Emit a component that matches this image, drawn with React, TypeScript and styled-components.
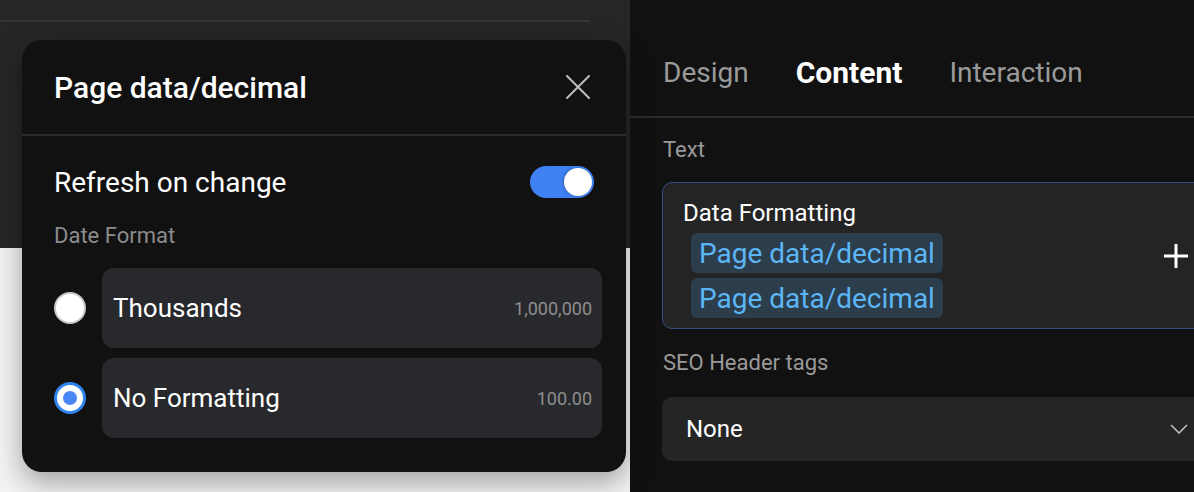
import React from "react";
import styled, { createGlobalStyle } from "styled-components";

const GlobalStyle = createGlobalStyle`
  html, body { margin: 0; padding: 0; background: #111111; }
  body { font-family: Roboto, "Noto Sans", "Liberation Sans", sans-serif; -webkit-font-smoothing: antialiased; }
  * { box-sizing: border-box; }
`;

const Screen = styled.div`
  display: flex;
  width: 1194px;
  height: 492px;
  overflow: hidden;
`;

const Canvas = styled.div`
  position: relative;
  width: 630px;
  flex: none;
  display: flex;
  flex-direction: column;
`;

const CanvasTop = styled.div`
  height: 248px;
  background: #262626;
  padding-top: 20px;
`;

const CanvasRule = styled.div`
  width: 590px;
  height: 2px;
  background: #353535;
`;

const CanvasBottom = styled.div`
  flex: 1;
  background: #f3f3f3;
`;

const Modal = styled.div`
  position: absolute;
  left: 22px;
  top: 40px;
  width: 604px;
  height: 432px;
  background: #111111;
  border-radius: 20px;
  box-shadow: 0 10px 28px rgba(0, 0, 0, 0.35);
  display: flex;
  flex-direction: column;
`;

const ModalHeader = styled.div`
  height: 96px;
  padding: 0 36px 0 32px;
  display: flex;
  align-items: center;
  justify-content: space-between;
  border-bottom: 2px solid #2c2c2c;
`;

const ModalTitle = styled.div`
  color: #ffffff;
  font-size: 30px;
  font-weight: 500;
`;

const CloseButton = styled.div`
  width: 24px;
  height: 24px;
  display: flex;
`;

const ModalBody = styled.div`
  padding: 30px 24px 0 32px;
  display: flex;
  flex-direction: column;
`;

const SwitchRow = styled.div`
  display: flex;
  align-items: center;
  justify-content: space-between;
  height: 32px;
  padding-right: 8px;
`;

const RowLabel = styled.div`
  color: #ffffff;
  font-size: 28px;
`;

const Toggle = styled.div<{ $on: boolean }>`
  position: relative;
  width: 64px;
  height: 32px;
  border-radius: 16px;
  background: ${(p) => (p.$on ? "#3f80f2" : "#444")};
`;

const Knob = styled.div<{ $on: boolean }>`
  position: absolute;
  top: 2px;
  left: ${(p) => (p.$on ? "34px" : "2px")};
  width: 28px;
  height: 28px;
  border-radius: 50%;
  background: #ffffff;
  box-shadow: -1px 0 3px rgba(0, 0, 0, 0.25);
`;

const SectionLabel = styled.div`
  color: #8c8c8c;
  font-size: 22px;
  line-height: 24px;
  margin-top: 26px;
  margin-bottom: 20px;
`;

const Options = styled.div`
  display: flex;
  flex-direction: column;
  gap: 10px;
`;

const OptionRow = styled.div`
  display: flex;
  align-items: center;
  gap: 16px;
`;

const Radio = styled.div<{ $checked: boolean }>`
  width: 32px;
  height: 32px;
  flex: none;
  border-radius: 50%;
  background: #ffffff;
  border: ${(p) => (p.$checked ? "3px solid #2f84ee" : "2px solid #c9c9c9")};
  display: flex;
  align-items: center;
  justify-content: center;
`;

const RadioDot = styled.div`
  width: 14px;
  height: 14px;
  border-radius: 50%;
  background: #4a86f5;
`;

const OptionCard = styled.div`
  flex: 1;
  height: 80px;
  border-radius: 12px;
  background: #28292c;
  display: flex;
  align-items: center;
  justify-content: space-between;
  padding: 0 10px 0 11px;
`;

const OptionName = styled.div`
  color: #ffffff;
  font-size: 26px;
`;

const OptionHint = styled.div`
  color: #8e8e8e;
  font-size: 18px;
`;

const Panel = styled.div`
  flex: 1;
  background: #111111;
  display: flex;
  flex-direction: column;
  overflow: hidden;
`;

const Tabs = styled.div`
  height: 118px;
  padding: 29px 0 0 33px;
  display: flex;
  align-items: center;
  gap: 47px;
  border-bottom: 2px solid #2c2c2c;
`;

const Tab = styled.div<{ $active?: boolean }>`
  font-size: ${(p) => (p.$active ? "30px" : "28px")};
  color: ${(p) => (p.$active ? "#ffffff" : "#9a9a9a")};
  font-weight: ${(p) => (p.$active ? 700 : 400)};
`;

const PanelBody = styled.div`
  padding: 20px 0 0 32px;
  display: flex;
  flex-direction: column;
  width: 580px;
`;

const FieldLabel = styled.div`
  color: #9a9a9a;
  font-size: 22px;
  line-height: 24px;
  padding-left: 1px;
`;

const TextBox = styled.div`
  margin-top: 20px;
  width: 548px;
  height: 147px;
  border: 1px solid #34507e;
  border-radius: 10px;
  background: #242424;
  padding: 17px 20px 0 20px;
  display: flex;
  justify-content: space-between;
`;

const TextBoxContent = styled.div`
  display: flex;
  flex-direction: column;
  align-items: flex-start;
`;

const BoxTitle = styled.div`
  color: #ffffff;
  font-size: 24px;
  line-height: 26px;
  margin-bottom: 7px;
`;

const Chip = styled.div`
  margin-left: 8px;
  margin-bottom: 5px;
  height: 40px;
  padding: 0 8px;
  border-radius: 6px;
  background: #2c3d4c;
  color: #5cb6f6;
  font-size: 28px;
  display: flex;
  align-items: center;
`;

const PlusButton = styled.div`
  margin-top: 43px;
  width: 26px;
  height: 26px;
  display: flex;
`;

const SelectBox = styled.div`
  margin-top: 22px;
  width: 548px;
  height: 64px;
  border-radius: 10px;
  background: #252525;
  padding: 0 22px 0 24px;
  display: flex;
  align-items: center;
  justify-content: space-between;
`;

const SelectValue = styled.div`
  color: #ffffff;
  font-size: 24px;
`;

const SeoLabel = styled(FieldLabel)`
  margin-top: 22px;
`;

export default function App() {
  return (
    <>
      <GlobalStyle />
      <Screen>
        <Canvas>
          <CanvasTop>
            <CanvasRule />
          </CanvasTop>
          <CanvasBottom />
          <Modal>
            <ModalHeader>
              <ModalTitle>Page data/decimal</ModalTitle>
              <CloseButton>
                <svg width="24" height="24" viewBox="0 0 24 24">
                  <path d="M1 1L23 23M23 1L1 23" stroke="#bdbdbd" strokeWidth="2" strokeLinecap="round" />
                </svg>
              </CloseButton>
            </ModalHeader>
            <ModalBody>
              <SwitchRow>
                <RowLabel>Refresh on change</RowLabel>
                <Toggle $on>
                  <Knob $on />
                </Toggle>
              </SwitchRow>
              <SectionLabel>Date Format</SectionLabel>
              <Options>
                <OptionRow>
                  <Radio $checked={false} />
                  <OptionCard>
                    <OptionName>Thousands</OptionName>
                    <OptionHint>1,000,000</OptionHint>
                  </OptionCard>
                </OptionRow>
                <OptionRow>
                  <Radio $checked>
                    <RadioDot />
                  </Radio>
                  <OptionCard>
                    <OptionName>No Formatting</OptionName>
                    <OptionHint>100.00</OptionHint>
                  </OptionCard>
                </OptionRow>
              </Options>
            </ModalBody>
          </Modal>
        </Canvas>
        <Panel>
          <Tabs>
            <Tab>Design</Tab>
            <Tab $active>Content</Tab>
            <Tab>Interaction</Tab>
          </Tabs>
          <PanelBody>
            <FieldLabel>Text</FieldLabel>
            <TextBox>
              <TextBoxContent>
                <BoxTitle>Data Formatting</BoxTitle>
                <Chip>Page data/decimal</Chip>
                <Chip>Page data/decimal</Chip>
              </TextBoxContent>
              <PlusButton>
                <svg width="26" height="26" viewBox="0 0 26 26">
                  <path d="M13 1V25M1 13H25" stroke="#ffffff" strokeWidth="3" />
                </svg>
              </PlusButton>
            </TextBox>
            <SeoLabel>SEO Header tags</SeoLabel>
            <SelectBox>
              <SelectValue>None</SelectValue>
              <svg width="18" height="10" viewBox="0 0 18 10">
                <path d="M1 1L9 9L17 1" stroke="#bdbdbd" strokeWidth="1.6" fill="none" />
              </svg>
            </SelectBox>
          </PanelBody>
        </Panel>
      </Screen>
    </>
  );
}
